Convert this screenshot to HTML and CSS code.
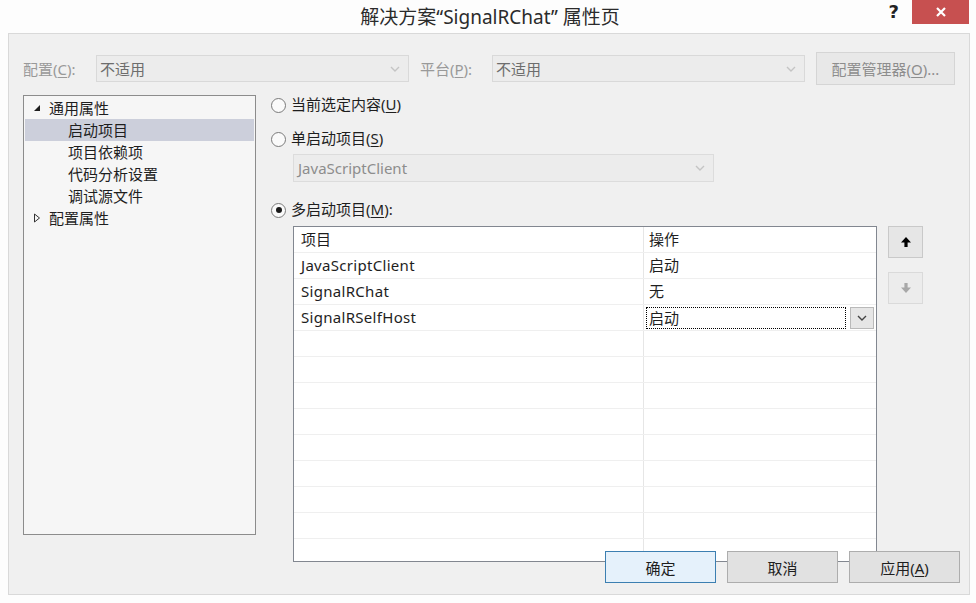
FILE: index.html
```html
<!DOCTYPE html>
<html lang="zh-CN">
<head>
    <meta charset="UTF-8">
    <title>解决方案“SignalRChat” 属性页</title>
    <link rel="stylesheet" href="styles.css">
</head>
<body>
    <div class="titlebar">
        <div class="title">解决方案“SignalRChat” 属性页</div>
        <div class="window-controls">
            <span class="help">?</span>
            <span class="close">
                <svg width="12" height="12" viewBox="0 0 12 12"><path d="M2 2 L10 10 M10 2 L2 10" stroke="#fff" stroke-width="2.2"/></svg>
            </span>
        </div>
    </div>

    <div class="dialog">
        <div class="config-row">
            <span class="field-label">配置(<u>C</u>):</span>
            <div class="select disabled">
                <span>不适用</span>
                <svg class="chevron" width="10" height="6" viewBox="0 0 10 6"><path d="M1 1 L5 5 L9 1" fill="none" stroke="#c4c4c4" stroke-width="1.4"/></svg>
            </div>
            <span class="field-label platform">平台(<u>P</u>):</span>
            <div class="select disabled">
                <span>不适用</span>
                <svg class="chevron" width="10" height="6" viewBox="0 0 10 6"><path d="M1 1 L5 5 L9 1" fill="none" stroke="#c4c4c4" stroke-width="1.4"/></svg>
            </div>
            <button class="btn disabled manager">配置管理器(<u>O</u>)...</button>
        </div>

        <div class="content">
            <!-- property tree -->
            <div class="tree">
                <div class="tree-item parent">
                    <svg class="twisty" width="8" height="8" viewBox="0 0 8 8"><path d="M7 1 L7 7 L1 7 Z" fill="#1e1e1e"/></svg>
                    通用属性
                </div>
                <div class="tree-item child selected">启动项目</div>
                <div class="tree-item child">项目依赖项</div>
                <div class="tree-item child">代码分析设置</div>
                <div class="tree-item child">调试源文件</div>
                <div class="tree-item parent">
                    <svg class="twisty" width="8" height="10" viewBox="0 0 8 10"><path d="M1.5 1 L6.5 5 L1.5 9 Z" fill="none" stroke="#333" stroke-width="1"/></svg>
                    配置属性
                </div>
            </div>

            <!-- startup project page -->
            <div class="startup">
                <div class="radio-row">
                    <span class="radio"></span>
                    <span>当前选定内容(<u>U</u>)</span>
                </div>
                <div class="radio-row single">
                    <span class="radio"></span>
                    <span>单启动项目(<u>S</u>)</span>
                </div>
                <div class="select disabled single-select">
                    <span class="latin">JavaScriptClient</span>
                    <svg class="chevron" width="10" height="6" viewBox="0 0 10 6"><path d="M1 1 L5 5 L9 1" fill="none" stroke="#c4c4c4" stroke-width="1.4"/></svg>
                </div>
                <div class="radio-row multi">
                    <span class="radio checked"></span>
                    <span>多启动项目(<u>M</u>):</span>
                </div>

                <div class="multi-area">
                    <div class="grid">
                        <div class="grid-row">
                            <div class="cell">项目</div>
                            <div class="cell">操作</div>
                        </div>
                        <div class="grid-row">
                            <div class="cell latin">JavaScriptClient</div>
                            <div class="cell">启动</div>
                        </div>
                        <div class="grid-row">
                            <div class="cell latin">SignalRChat</div>
                            <div class="cell">无</div>
                        </div>
                        <div class="grid-row">
                            <div class="cell latin">SignalRSelfHost</div>
                            <div class="cell editing">
                                <div class="edit-box">启动</div>
                                <div class="drop-btn">
                                    <svg width="10" height="6" viewBox="0 0 10 6"><path d="M1 1 L5 5 L9 1" fill="none" stroke="#444" stroke-width="1.4"/></svg>
                                </div>
                            </div>
                        </div>
                        <div class="grid-row"><div class="cell"></div><div class="cell"></div></div>
                        <div class="grid-row"><div class="cell"></div><div class="cell"></div></div>
                        <div class="grid-row"><div class="cell"></div><div class="cell"></div></div>
                        <div class="grid-row"><div class="cell"></div><div class="cell"></div></div>
                        <div class="grid-row"><div class="cell"></div><div class="cell"></div></div>
                        <div class="grid-row"><div class="cell"></div><div class="cell"></div></div>
                        <div class="grid-row"><div class="cell"></div><div class="cell"></div></div>
                        <div class="grid-row"><div class="cell"></div><div class="cell"></div></div>
                        <div class="grid-row"><div class="cell"></div><div class="cell"></div></div>
                        <div class="grid-row"><div class="cell"></div><div class="cell"></div></div>
                    </div>
                    <div class="move-buttons">
                        <button class="btn move">
                            <svg width="12" height="12" viewBox="0 0 12 12"><path d="M6 1 L11 6.5 L7.6 6.5 L7.6 11 L4.4 11 L4.4 6.5 L1 6.5 Z" fill="#000"/></svg>
                        </button>
                        <button class="btn move disabled">
                            <svg width="12" height="12" viewBox="0 0 12 12"><path d="M6 11 L11 5.5 L7.6 5.5 L7.6 1 L4.4 1 L4.4 5.5 L1 5.5 Z" fill="#a8a8a8"/></svg>
                        </button>
                    </div>
                </div>
            </div>
        </div>

        <div class="dialog-buttons">
            <button class="btn default">确定</button>
            <button class="btn">取消</button>
            <button class="btn">应用(<u>A</u>)</button>
        </div>
    </div>
</body>
</html>
```

FILE: styles.css
```css
* {
    margin: 0;
    padding: 0;
    box-sizing: border-box;
}

body {
    width: 976px;
    height: 603px;
    overflow: hidden;
    background: #fdfdfd;
    font-family: "Noto Sans", "Noto Sans CJK SC", sans-serif;
    font-size: 15px;
    color: #1e1e1e;
}

u {
    text-underline-offset: 2px;
}

/* title bar */
.titlebar {
    position: relative;
    height: 33px;
}

.title {
    text-align: center;
    font-size: 19px;
    line-height: 34px;
    color: #2b2b2b;
    padding-left: 4px;
}

.window-controls {
    position: absolute;
    top: 0;
    right: 7px;
    display: flex;
    align-items: flex-start;
}

.help {
    font-family: "DejaVu Sans", sans-serif;
    font-weight: bold;
    font-size: 18px;
    line-height: 24px;
    color: #222;
    margin-right: 13px;
}

.close {
    display: flex;
    align-items: center;
    justify-content: center;
    width: 57px;
    height: 24px;
    background: #c75050;
}

/* dialog body */
.dialog {
    position: relative;
    width: 962px;
    height: 562px;
    margin-left: 8px;
    border: 1px solid #d9d9d9;
    background: #f0f0f0;
}

.config-row {
    display: flex;
    align-items: center;
    height: 33px;
    margin-top: 18px;
    padding-left: 14px;
}

.field-label {
    width: 73px;
    color: #999;
}

.field-label.platform {
    width: 72px;
    margin-left: 11px;
}

.select {
    display: flex;
    align-items: center;
    justify-content: space-between;
    width: 313px;
    height: 27px;
    padding: 0 8px 0 3px;
    border: 1px solid #d9d9d9;
    background: #ececec;
}

.select.disabled {
    color: #6d6d6d;
}

.btn {
    font-family: inherit;
    font-size: 15px;
    color: #1e1e1e;
    height: 32px;
    border: 1px solid #adadad;
    background: #e1e1e1;
}

.btn.disabled {
    color: #8d8d8d;
    border-color: #d5d5d5;
    background: #e8e8e8;
}

.manager {
    width: 139px;
    height: 33px;
    margin-left: 11px;
}

.content {
    display: flex;
    align-items: flex-start;
    margin-top: 10px;
    padding-left: 14px;
}

/* left tree */
.tree {
    width: 233px;
    height: 440px;
    padding: 1px;
    border: 1px solid #8c8c8c;
    background: #f6f6f6;
}

.tree-item {
    display: flex;
    align-items: center;
    height: 22px;
    line-height: 22px;
}

.tree-item.parent {
    padding-left: 8px;
}

.tree-item .twisty {
    margin-right: 8px;
}

.tree-item.child {
    padding-left: 43px;
}

.tree-item.selected {
    background: #cccfdb;
}

/* right page */
.startup {
    margin-left: 14px;
    margin-top: -3px;
}

.radio-row {
    display: flex;
    align-items: center;
    height: 24px;
    line-height: 24px;
}

.radio-row .radio {
    margin-top: 2px;
}

.radio-row.single {
    margin-top: 10px;
}

.radio-row.multi {
    margin-top: 15px;
}

.radio {
    position: relative;
    width: 15px;
    height: 15px;
    margin: 0 5px 0 1px;
    border: 1px solid #7a7a7a;
    border-radius: 50%;
    background: #fafafa;
}

.radio.checked::after {
    content: "";
    position: absolute;
    top: 3.5px;
    left: 3.5px;
    width: 6px;
    height: 6px;
    border-radius: 50%;
    background: #1a1a1a;
}

.single-select {
    width: 421px;
    height: 28px;
    margin: 4px 0 0 23px;
    border-color: #dcdcdc;
    padding-left: 4px;
}

.single-select .latin {
    color: #8d8d8d;
}

.multi-area {
    display: flex;
    align-items: flex-start;
    margin: 5px 0 0 23px;
}

.grid {
    width: 584px;
    height: 336px;
    overflow: hidden;
    border: 1px solid #828790;
    background: #fff;
}

.grid-row {
    display: grid;
    grid-template-columns: 350px 1fr;
    height: 26px;
    border-bottom: 1px solid #efefef;
}

.cell {
    line-height: 25px;
    padding-left: 7px;
}

.cell.latin {
    letter-spacing: 0.3px;
}

.cell:first-child {
    border-right: 1px solid #e6e6e6;
}

.cell:last-child {
    padding-left: 5px;
}

.cell.editing {
    display: flex;
    align-items: flex-start;
    padding: 2px 0 0 2px;
}

.edit-box {
    width: 200px;
    height: 22px;
    line-height: 20px;
    padding-left: 2px;
    border: 1px dotted #000;
}

.drop-btn {
    display: flex;
    align-items: center;
    justify-content: center;
    width: 24px;
    height: 22px;
    margin-left: 4px;
    border: 1px solid #b9b9b9;
    background: #e6e6e6;
}

.move-buttons {
    display: flex;
    flex-direction: column;
    gap: 14px;
    margin-left: 11px;
}

.btn.move {
    display: flex;
    align-items: center;
    justify-content: center;
    width: 35px;
    height: 32px;
    border-color: #c9c9c9;
    background: #e6e6e6;
}

.btn.move.disabled {
    border-color: #dadada;
    background: #ececec;
}

/* ok / cancel / apply */
.dialog-buttons {
    position: absolute;
    right: 9px;
    bottom: 11px;
    display: flex;
    gap: 11px;
}

.dialog-buttons .btn {
    width: 111px;
}

.btn.default {
    border-color: #3c7fb1;
    background: #e5f1fb;
}
```
